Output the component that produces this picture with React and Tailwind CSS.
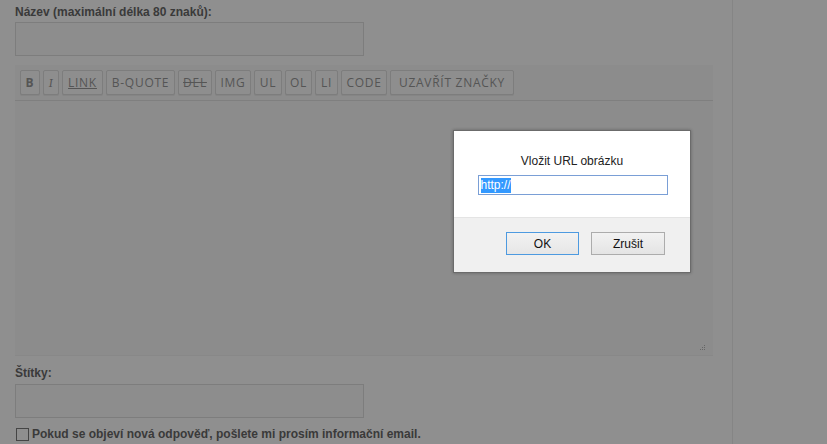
import React from 'react';

const tags = [
  { label: 'B', cls: 'font-bold w-[20px]' },
  { label: 'I', cls: 'italic font-serif w-[16px]' },
  { label: 'LINK', cls: 'underline w-[41px]' },
  { label: 'B-QUOTE', cls: 'w-[69px]' },
  { label: 'DEL', cls: 'line-through w-[34px]' },
  { label: 'IMG', cls: 'w-[36px]' },
  { label: 'UL', cls: 'w-[28px]' },
  { label: 'OL', cls: 'w-[27px]' },
  { label: 'LI', cls: 'w-[23px]' },
  { label: 'CODE', cls: 'w-[46px]' },
  { label: 'UZAVŘÍT ZNAČKY', cls: 'w-[124px]' },
];

const ImagePrompt = () => (
  <div className="absolute left-[453px] top-[130px] w-[238px] h-[143px] bg-white border border-[#6b6b6b] shadow-[0_0_3px_rgba(0,0,0,0.3)] flex flex-col font-['Liberation_Sans',Arial,sans-serif]">
    <div className="h-[86px] flex flex-col items-center pt-[23px]">
      <div className="text-[12px] leading-[14px] text-[#222]">Vložit URL obrázku</div>
      <div className="mt-[7px] ml-[1px] w-[190px] h-[20px] border border-[#7a9fd6] px-[2px] flex items-center text-[12px]">
        <span className="bg-[#3399ff] text-white leading-[15px]">http://</span>
      </div>
    </div>
    <div className="flex-1 bg-[#f0f0f0] border-t border-[#e4e4e4] flex justify-end items-start pt-[14px] pr-[25px] gap-[12px]">
      <button className="w-[73px] h-[23px] border border-[#4d9ae0] bg-gradient-to-b from-[#f2f2f2] to-[#e6e6e6] text-[12px] text-[#111]">OK</button>
      <button className="w-[74px] h-[23px] border border-[#acacac] bg-gradient-to-b from-[#f2f2f2] to-[#e4e4e4] text-[12px] text-[#111]">Zrušit</button>
    </div>
  </div>
);

export default function App() {
  return (
    <div className="relative w-[827px] h-[444px] overflow-hidden bg-[#8f8f8f] font-['Liberation_Sans',Arial,sans-serif]">
      <div className="flex h-full">
        <div className="w-[733px] border-r border-[#858585] pl-[15px] pr-[20px] pt-[4px]">
          <label className="block text-[12px] font-bold text-[#3a3a3a] leading-[16px]">Název (maximální délka 80 znaků):</label>
          <div className="mt-[2px] w-[349px] h-[34px] border border-[#7d7d7d] bg-[#8d8d8d]" />

          <div className="mt-[9px] w-[698px] bg-[#8c8c8c]">
            <div className="flex gap-[3px] pl-[5px] pt-[5px] pb-[5px] border-b border-[#7f7f7f] font-['Open_Sans','DejaVu_Sans',sans-serif]">
              {tags.map((t) => (
                <div
                  key={t.label}
                  className={`shrink-0 h-[25px] flex items-center justify-center overflow-hidden whitespace-nowrap border border-[#7d7d7d] rounded-[2px] bg-[#8e8e8e] shadow-[0_1px_0_#858585] text-[12px] tracking-[0.06em] text-[#555] ${t.cls}`}
                >
                  {t.label}
                </div>
              ))}
            </div>
            <div className="relative h-[255px] border-b border-[#888]">
              <svg className="absolute right-[7px] bottom-[2px]" width="8" height="8" viewBox="0 0 8 8">
                <rect x="6" y="0" width="1" height="1" fill="#666" />
                <rect x="4" y="2" width="1" height="1" fill="#666" />
                <rect x="6" y="2" width="1" height="1" fill="#666" />
                <rect x="2" y="4" width="1" height="1" fill="#666" />
                <rect x="4" y="4" width="1" height="1" fill="#666" />
                <rect x="6" y="4" width="1" height="1" fill="#666" />
              </svg>
            </div>
          </div>

          <label className="block mt-[9px] text-[12px] font-bold text-[#3a3a3a] leading-[16px]">Štítky:</label>
          <div className="mt-[3px] w-[349px] h-[34px] border border-[#7d7d7d] bg-[#8d8d8d]" />
          <div className="mt-[9px] flex items-center gap-[3px] pl-[1px]">
            <span className="w-[13px] h-[13px] border border-[#454545] bg-[#8f8f8f]" />
            <span className="text-[12px] font-bold text-[#3a3a3a] leading-[14px]">Pokud se objeví nová odpověď, pošlete mi prosím informační email.</span>
          </div>
        </div>
        <div className="flex-1" />
      </div>
      <ImagePrompt />
    </div>
  );
}
